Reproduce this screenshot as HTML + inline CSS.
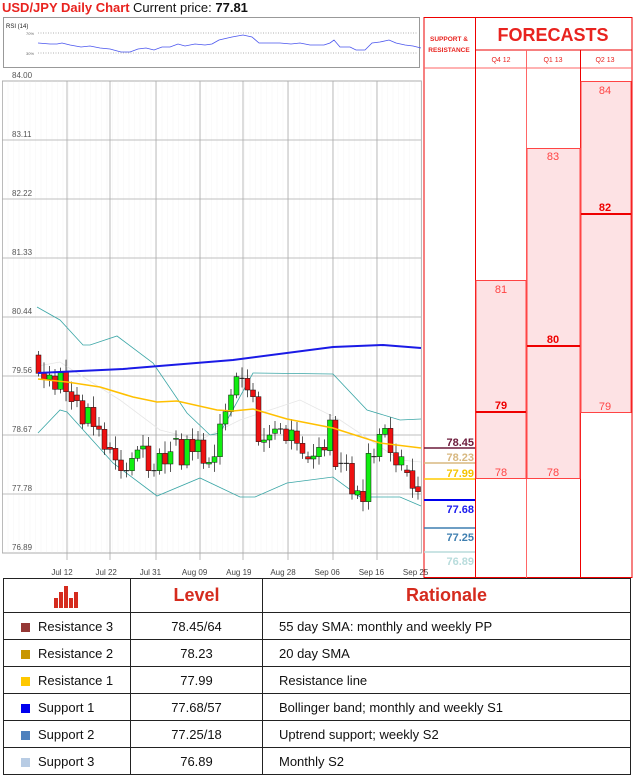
<!DOCTYPE html>
<html><head><meta charset="utf-8"><style>
body{margin:0;width:633px;height:778px;background:#fff;position:relative;overflow:hidden;font-family:"Liberation Sans",sans-serif}
.a{position:absolute}
table{border-collapse:collapse;position:absolute;left:3px;top:578px;width:628px;font-size:13px;color:#111}
td{border:1px solid #222;padding:0;height:26px}
.hd{height:33px;color:#d52b1e;font-weight:bold;font-size:18px;text-align:center}
.sq{display:inline-block;width:9px;height:9px;margin:0 8px 0 17px;vertical-align:-1px}
</style></head><body>
<div class="a" style="left:2px;top:0;font-size:13px;font-weight:bold;color:#e8231f">USD/JPY Daily Chart</div>
<div class="a" style="left:133px;top:0;font-size:13px;color:#111">Current price: <b>77.81</b></div>
<svg class="a" style="left:0;top:0" width="633" height="578">
<rect x="3.5" y="17.5" width="416" height="50" fill="#fff" stroke="#999"/>
<text x="6" y="28" font-size="6" font-family="Liberation Sans" fill="#222">RSI (14)</text>
<text x="26" y="35" font-size="4" fill="#666" font-family="Liberation Sans">70%</text>
<text x="26" y="55" font-size="4" fill="#666" font-family="Liberation Sans">30%</text>
<line x1="38" y1="33" x2="418" y2="33" stroke="#666" stroke-dasharray="1,1.5" stroke-width="0.6"/>
<line x1="38" y1="53" x2="418" y2="53" stroke="#666" stroke-dasharray="1,1.5" stroke-width="0.6"/>
<polyline fill="none" stroke="#4a55ee" stroke-width="0.8" points="38,43 50,44 57,44 62,43 70,45 81,47 90,46 100,48 110,49 121,52 130,52 138,49 146,48 154,50 162,47 170,47 178,44 185,46 195,44 205,45 212,44 219,40 232,37 243,35 252,37 259,43 270,43 280,43 291,44 300,43 310,45 324,45 330,43 334,40 340,47 350,47 356,50 365,50 372,43 380,42 389,40 396,43 405,45 413,46 421,48"/>
<rect x="424" y="17.5" width="208" height="560" fill="none" stroke="#e00" stroke-width="1"/>
<line x1="424" y1="68" x2="632" y2="68" stroke="#f66"/>
<line x1="475" y1="50" x2="632" y2="50" stroke="#e00"/>
<line x1="475.5" y1="17" x2="475.5" y2="578" stroke="#e00"/>
<line x1="526.5" y1="50" x2="526.5" y2="578" stroke="#f66"/>
<line x1="580.5" y1="50" x2="580.5" y2="578" stroke="#e00"/>
<text x="449" y="41" font-size="6.5" font-weight="bold" fill="#e8231f" text-anchor="middle" font-family="Liberation Sans">SUPPORT &amp;</text>
<text x="449" y="52" font-size="6.5" font-weight="bold" fill="#e8231f" text-anchor="middle" font-family="Liberation Sans">RESISTANCE</text>
<text x="553" y="41" font-size="18" font-weight="bold" fill="#e8231f" text-anchor="middle" font-family="Liberation Sans">FORECASTS</text>
<text x="501" y="62" font-size="7" fill="#e8231f" text-anchor="middle" font-family="Liberation Sans">Q4 12</text>
<text x="553" y="62" font-size="7" fill="#e8231f" text-anchor="middle" font-family="Liberation Sans">Q1 13</text>
<text x="605" y="62" font-size="7" fill="#e8231f" text-anchor="middle" font-family="Liberation Sans">Q2 13</text>
<g font-family="Liberation Sans" font-size="11" fill="#f44" text-anchor="middle">
<rect x="476" y="280.5" width="50" height="198" fill="#fde2e4" stroke="#f44"/>
<line x1="476" y1="412" x2="526" y2="412" stroke="#e00" stroke-width="2"/>
<text x="501" y="293">81</text><text x="501" y="409" font-weight="bold" fill="#e00">79</text><text x="501" y="476">78</text>
<rect x="527" y="148.5" width="53" height="330" fill="#fde2e4" stroke="#f44"/>
<line x1="527" y1="346" x2="580" y2="346" stroke="#e00" stroke-width="2"/>
<text x="553" y="160">83</text><text x="553" y="343" font-weight="bold" fill="#e00">80</text><text x="553" y="476">78</text>
<rect x="581" y="81.5" width="50" height="331" fill="#fde2e4" stroke="#f44"/>
<line x1="581" y1="214" x2="631" y2="214" stroke="#e00" stroke-width="2"/>
<text x="605" y="94">84</text><text x="605" y="211" font-weight="bold" fill="#e00">82</text><text x="605" y="410">79</text>
</g>
<g font-family="Liberation Sans" font-size="11" font-weight="bold" text-anchor="end">
<line x1="424" y1="448" x2="475" y2="448" stroke="#6b1a3a" stroke-width="1.5"/><text x="474" y="446" fill="#6b1a3a">78.45</text>
<line x1="424" y1="463" x2="475" y2="463" stroke="#d8b880" stroke-width="1.5"/><text x="474" y="461" fill="#d8b880">78.23</text>
<line x1="424" y1="479" x2="475" y2="479" stroke="#ffcc00" stroke-width="1.5"/><text x="474" y="477" fill="#f5c400">77.99</text>
<line x1="424" y1="500" x2="475" y2="500" stroke="#0000ee" stroke-width="2"/><text x="474" y="513" fill="#1a1aee">77.68</text>
<line x1="424" y1="528" x2="475" y2="528" stroke="#3f7fb0" stroke-width="1.5"/><text x="474" y="541" fill="#3f7fb0">77.25</text>
<line x1="424" y1="552" x2="475" y2="552" stroke="#b8dcdc" stroke-width="1.5"/><text x="474" y="565" fill="#b8dcdc">76.89</text>
</g>
<g id="chart"></g>
</svg>
<table>
<tr><td class="hd" style="width:126px"><svg width="30" height="24" style="vertical-align:middle"><rect x="2" y="14" width="4" height="10" fill="#d52b1e"/><rect x="7" y="8" width="4" height="16" fill="#d52b1e"/><rect x="12" y="2" width="4" height="22" fill="#d52b1e"/><rect x="17" y="14" width="4" height="10" fill="#d52b1e"/><rect x="22" y="8" width="4" height="16" fill="#d52b1e"/></svg></td><td class="hd" style="width:131px">Level</td><td class="hd">Rationale</td></tr>
<tr><td><span class="sq" style="background:#953735"></span>Resistance 3</td><td align="center">78.45/64</td><td style="padding-left:16px">55 day SMA: monthly and weekly PP</td></tr>
<tr><td><span class="sq" style="background:#c89600"></span>Resistance 2</td><td align="center">78.23</td><td style="padding-left:16px">20 day SMA</td></tr>
<tr><td><span class="sq" style="background:#ffc800"></span>Resistance 1</td><td align="center">77.99</td><td style="padding-left:16px">Resistance line</td></tr>
<tr><td><span class="sq" style="background:#0000ee"></span>Support 1</td><td align="center">77.68/57</td><td style="padding-left:16px">Bollinger band; monthly and weekly S1</td></tr>
<tr><td><span class="sq" style="background:#4f81bd"></span>Support 2</td><td align="center">77.25/18</td><td style="padding-left:16px">Uptrend support; weekly S2</td></tr>
<tr><td><span class="sq" style="background:#b8cce4"></span>Support 3</td><td align="center">76.89</td><td style="padding-left:16px">Monthly S2</td></tr>
</table>
<script>
var g=document.getElementById('chart'),s='';
s+='<rect x="2.5" y="81" width="419" height="472" fill="#fff" stroke="#bbb"/>';
for(var x=8;x<421;x+=5.5)s+='<line x1="'+x+'" y1="81" x2="'+x+'" y2="553" stroke="#f7f7f7" stroke-width="0.6"/>';
var vx=[67,110,156,200,243,288,333,377],lb=['Jul 12','Jul 22','Jul 31','Aug 09','Aug 19','Aug 28','Sep 06','Sep 16','Sep 25'];
vx.forEach(function(x){s+='<line x1="'+x+'" y1="81" x2="'+x+'" y2="560" stroke="#aaa" stroke-width="0.8"/>';});
lb.forEach(function(t,i){s+='<text x="'+(62+i*44.2)+'" y="575" font-size="8" fill="#444" text-anchor="middle" font-family="Liberation Sans">'+t+'</text>';});
var pl=['84.00','83.11','82.22','81.33','80.44','79.56','78.67','77.78','76.89'];
pl.forEach(function(t,i){var y=81+i*59;s+='<line x1="2" y1="'+y+'" x2="421" y2="'+y+'" stroke="#aaa" stroke-width="0.8"/><text x="12" y="'+(y-3)+'" font-size="8" fill="#555" font-family="Liberation Sans">'+t+'</text>';});
s+='<polyline fill="none" stroke="#e6e6e6" stroke-width="0.8" points="38,366 60,362 80,375 120,400 160,430 200,440 240,420 270,410 300,400 340,420 370,440 400,460 421,462"/>';
s+='<polyline fill="none" stroke="#3aa6a6" stroke-width="0.8" points="37,307 60,320 83,345 90,345 117,336 153,363 187,413 210,435 220,433 253,373 333,374 367,410 400,420 421,419"/>';
s+='<polyline fill="none" stroke="#3aa6a6" stroke-width="0.8" points="38,433 60,410 67,412 113,463 157,496 200,478 240,497 255,497 287,483 333,477 360,497 400,497 421,506"/>';
var c=[[1,75,130],[1,130,148],[0,135,148],[1,138,178],[0,128,178],[1,125,185],[1,185,215],[1,195,212],[1,212,282],[0,232,280],[1,232,290],[1,288,298],[1,298,358],[1,352,358],[1,355,390],[1,390,422],[2,422,423],[0,385,422],[0,360,385],[0,348,357],[1,348,422],[2,422,423],[0,370,422],[1,370,402],[0,365,402],[0,325,328],[1,328,405],[0,328,405],[1,328,365],[0,330,365],[1,330,400],[0,397,402],[0,380,397],[0,282,380],[0,245,282],[0,195,245],[0,140,195],[2,145,146],[1,145,180],[1,180,200],[1,200,335],[0,330,337],[0,315,330],[0,297,310],[2,297,298],[1,297,332],[0,300,332],[1,303,340],[1,340,370],[1,380,387],[0,378,387],[0,352,380],[1,352,360],[0,270,362],[1,270,410],[2,400,401],[2,400,401],[1,400,492],[0,482,495],[1,484,515],[0,370,515],[2,380,381],[0,313,380],[0,295,313],[1,295,368],[1,368,405],[0,380,405],[1,420,428],[1,422,475],[1,470,485]];
c.forEach(function(d,i){var x=38.5+i*5.5,t=330+d[1]/3,b=330+d[2]/3,w=4+((i*7)%9);
s+='<line x1="'+x+'" y1="'+(t-w)+'" x2="'+x+'" y2="'+(b+w*0.8)+'" stroke="#111" stroke-width="0.7"/>';
if(d[0]==2)s+='<line x1="'+(x-2.5)+'" y1="'+t+'" x2="'+(x+2.5)+'" y2="'+t+'" stroke="#111"/>';
else s+='<rect x="'+(x-2.5)+'" y="'+t+'" width="5" height="'+Math.max(1,b-t)+'" fill="'+(d[0]?'#ee1111':'#11ee11')+'" stroke="#111" stroke-width="0.5"/>';});
s+='<polyline fill="none" stroke="#ffc000" stroke-width="1.6" points="38,379 67,382 100,387 133,397 157,402 177,401 217,410 233,411 253,409 287,419 333,428 380,443 421,448"/>';
s+='<polyline fill="none" stroke="#1a1ae6" stroke-width="2" points="38,373 123,369 233,360 333,347 383,345 421,348"/>';
g.innerHTML=s;
</script>
</body></html>
